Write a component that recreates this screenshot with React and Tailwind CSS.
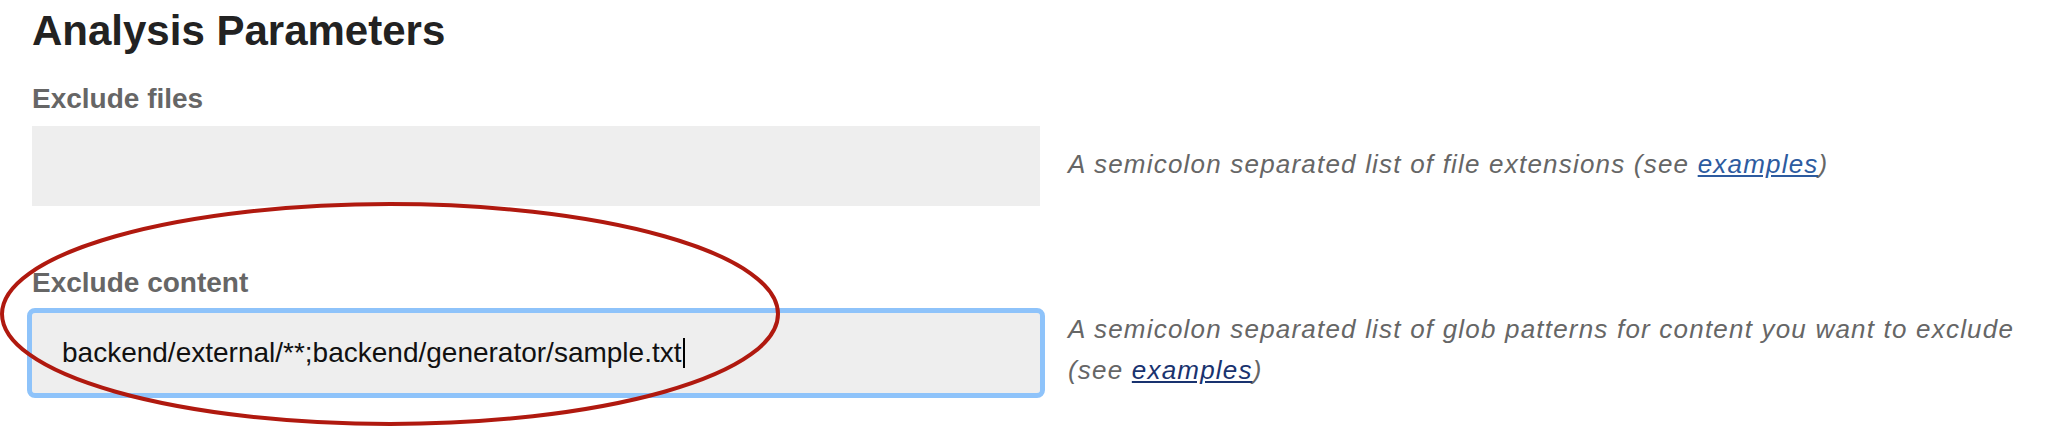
import React from "react";

const Field = ({ label, help, value, focused, linkColor, top }) => (
  <div>
    <div className={`${top} text-[28px] leading-[32px] font-bold text-[#666]`}>{label}</div>
    <div className="flex items-center">
      <div
        className={`w-[1008px] h-[80px] shrink-0 bg-[#eeeeee] flex items-center pl-[30px] text-[28px] text-[#111] ${
          focused ? "rounded-[3px] outline-[5px] outline-solid outline-[#8ec3fa] mt-[14px]" : "mt-[11px]"
        }`}
      >
        {value}
        {focused && <span className="inline-block w-[2px] h-[30px] bg-black ml-[1px]" />}
      </div>
      <div className="flex-1 ml-[28px] text-[26px] leading-[41px] italic tracking-[1.2px] text-[#666] mt-[8px]">
        {help} (see{" "}
        <a href="#" className={`underline ${linkColor}`}>
          examples
        </a>
        )
      </div>
    </div>
  </div>
);

export default function App() {
  return (
    <div className="relative w-[2064px] h-[434px] overflow-hidden bg-white pl-8 pt-[7px] font-['Liberation_Sans',Arial,sans-serif]">
      <h2 className="text-[42px] leading-[48px] font-bold text-[#222]">Analysis Parameters</h2>

      <Field
        top="mt-[28px]"
        label="Exclude files"
        help="A semicolon separated list of file extensions"
        linkColor="text-[#2d5b9f]"
      />

      <Field
        top="mt-[61px]"
        label="Exclude content"
        help="A semicolon separated list of glob patterns for content you want to exclude"
        value="backend/external/**;backend/generator/sample.txt"
        focused
        linkColor="text-[#19336f]"
      />

      {/* red annotation ring */}
      <svg className="absolute left-0 top-0 pointer-events-none" width="800" height="434">
        <ellipse cx="390" cy="314" rx="388" ry="110" fill="none" stroke="#b0190f" strokeWidth="4" />
      </svg>
    </div>
  );
}
